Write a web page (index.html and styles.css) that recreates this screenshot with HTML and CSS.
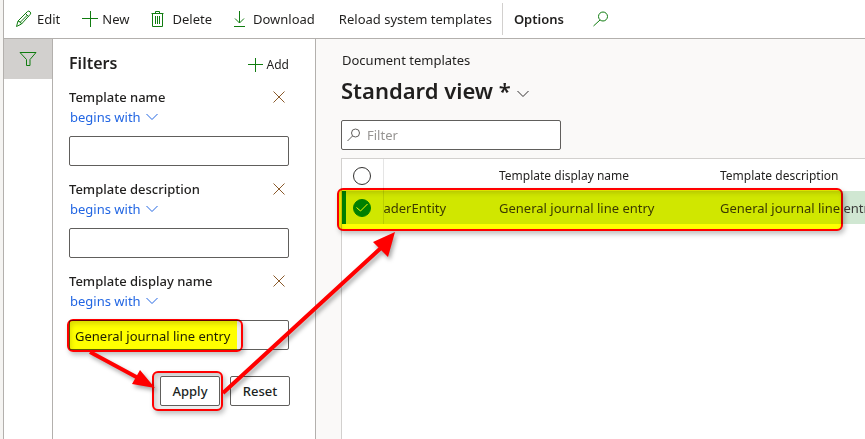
FILE: index.html
```html
<!DOCTYPE html>
<html lang="en">
<head>
    <meta charset="UTF-8">
    <meta name="viewport" content="width=device-width, initial-scale=1">
    <title>Document templates</title>
    <link rel="stylesheet" href="styles.css">
</head>
<body>
    <div class="app">
        <header class="toolbar">
            <button type="button" class="command edit">
                <svg class="icon" width="18" height="18" viewBox="0 0 18 18"><path d="M1.500 16.500l1.500-5.500L12.500 1.500q1.200-1 2.500.3 1.300 1.300.3 2.500L6.500 14zM3 11q3 .5 3.500 3M10.500 3.500l3 3M5 12.500l7.500-7.500"/></svg>
                Edit
            </button>
            <button type="button" class="command new">
                <svg class="icon" width="16" height="16" viewBox="0 0 16 16"><path d="M8.500 0v16M0 7.500h16"/></svg>
                New
            </button>
            <button type="button" class="command delete">
                <svg class="icon" width="14" height="16" viewBox="0 0 14 16"><path d="M.5 2.500h12M4.500 2.500v-2h4v2M1.500 2.500v13h10v-13M4.500 5v8M6.500 5v8M8.500 5v8"/></svg>
                Delete
            </button>
            <button type="button" class="command download">
                <svg class="icon" width="12" height="16" viewBox="0 0 12 16"><path d="M5.500 0v12M1 7.500l4.500 4.500 4.500-4.500M0 15.500h11"/></svg>
                Download
            </button>
            <button type="button" class="command reload">Reload system templates</button>
            <button type="button" class="command options">Options</button>
            <button type="button" class="command search" aria-label="Search">
                <svg class="icon" width="16" height="16" viewBox="0 0 16 16"><circle cx="10" cy="5.500" r="4.500"/><path d="M7 9l-6.500 6"/></svg>
            </button>
        </header>

        <div class="body">
            <nav class="rail">
                <button type="button" class="rail-button" aria-label="Show filters">
                    <svg class="icon" width="18" height="16" viewBox="0 0 18 16"><path d="M1 1.500h16l-6 7v6H7.500v-6z"/></svg>
                </button>
            </nav>

            <aside class="filters">
                <div class="filters-header">
                    <h2 class="filters-title">Filters</h2>
                    <button type="button" class="add">
                        <svg class="icon" width="16" height="16" viewBox="0 0 16 16"><path d="M8.500 1v14M1 7.500h15"/></svg>
                        Add
                    </button>
                </div>

                <div class="filter">
                    <div class="filter-header">
                        <label for="templateName">Template name</label>
                        <button type="button" class="remove" aria-label="Remove filter">
                            <svg width="12" height="12" viewBox="0 0 12 12"><path d="M.5.5l11 11M11.500.5l-11 11"/></svg>
                        </button>
                    </div>
                    <div class="operator">
                        <select aria-label="Template name operator"><option>begins with</option></select>
                        <svg width="12" height="8" viewBox="0 0 12 8"><path d="M.5 1l5.500 5.500L11.500 1"/></svg>
                    </div>
                    <input type="text" class="field" id="templateName">
                </div>

                <div class="filter">
                    <div class="filter-header">
                        <label for="templateDescription">Template description</label>
                        <button type="button" class="remove" aria-label="Remove filter">
                            <svg width="12" height="12" viewBox="0 0 12 12"><path d="M.5.5l11 11M11.500.5l-11 11"/></svg>
                        </button>
                    </div>
                    <div class="operator">
                        <select aria-label="Template description operator"><option>begins with</option></select>
                        <svg width="12" height="8" viewBox="0 0 12 8"><path d="M.5 1l5.500 5.500L11.500 1"/></svg>
                    </div>
                    <input type="text" class="field" id="templateDescription">
                </div>

                <div class="filter">
                    <div class="filter-header">
                        <label for="displayName">Template display name</label>
                        <button type="button" class="remove" aria-label="Remove filter">
                            <svg width="12" height="12" viewBox="0 0 12 12"><path d="M.5.5l11 11M11.500.5l-11 11"/></svg>
                        </button>
                    </div>
                    <div class="operator">
                        <select aria-label="Template display name operator"><option>begins with</option></select>
                        <svg width="12" height="8" viewBox="0 0 12 8"><path d="M.5 1l5.500 5.500L11.500 1"/></svg>
                    </div>
                    <input type="text" class="field" id="displayName" value="General journal line entry">
                </div>

                <div class="actions">
                    <button type="button" class="action">Apply</button>
                    <button type="button" class="action">Reset</button>
                </div>
            </aside>

            <main class="content">
                <div class="caption">Document templates</div>
                <h1 class="view-title">
                    Standard view *
                    <svg width="12" height="8" viewBox="0 0 12 8"><path d="M.5 1l5.500 5.500L11.500 1"/></svg>
                </h1>
                <div class="quick-filter">
                    <svg width="14" height="14" viewBox="0 0 14 14"><circle cx="8.500" cy="5" r="4"/><path d="M5.500 8L.5 13"/></svg>
                    <input type="text" placeholder="Filter" aria-label="Filter">
                </div>
                <div class="grid">
                    <table>
                        <colgroup>
                            <col class="col-select">
                            <col class="col-entity">
                            <col class="col-display">
                            <col>
                        </colgroup>
                        <thead>
                            <tr>
                                <th class="select"><input type="checkbox" aria-label="Select all"></th>
                                <th></th>
                                <th>Template display name</th>
                                <th>Template description</th>
                            </tr>
                        </thead>
                        <tbody>
                            <tr class="selected">
                                <td class="select"><input type="checkbox" aria-label="Select row" checked><svg class="check" width="12" height="9" viewBox="0 0 12 9"><path d="M.5 4.500l4 3.500L11.500 1"/></svg></td>
                                <td>aderEntity</td>
                                <td>General journal line entry</td>
                                <td>General journal line entry</td>
                            </tr>
                        </tbody>
                    </table>
                </div>
            </main>
        </div>
    </div>

    <!-- Step markers drawn over the page -->
    <div class="callout callout-value"></div>
    <div class="callout callout-apply"></div>
    <div class="callout callout-row"></div>
    <svg class="arrows" width="400" height="439" viewBox="0 0 400 439">
        <path class="shaft" d="M90 352L140 379M223 393L382 247"/>
        <path class="head" d="M155 388L140 370 132 384zM395 232L373 242 388 257z"/>
    </svg>
</body>
</html>
```
FILE: styles.css
```css
* {
    box-sizing: border-box;
}

body {
    margin: 0;
    overflow: hidden;
    background: #f5f4f2;
    color: #201f1e;
    font-family: "Noto Sans", "Open Sans", sans-serif;
    font-size: 13px;
    line-height: 20px;
}

button, input, select {
    font: inherit;
    color: inherit;
}

button {
    padding: 0;
    border: 0;
    background: none;
}

svg {
    flex: none;
    fill: none;
    stroke: #605e5c;
}

.icon {
    stroke: #107c10;
}

.app {
    display: flex;
    flex-direction: column;
    height: 100vh;
    margin-left: 3px;
    border-left: 1px solid #b3b0ad;
}

/* Toolbar */
.toolbar {
    display: flex;
    align-items: center;
    flex: none;
    gap: 22px;
    height: 39px;
    padding-left: 11px;
    border-bottom: 1px solid #b3b0ad;
    background: #fff;
    white-space: nowrap;
}

.command {
    display: flex;
    align-items: center;
    gap: 4px;
    height: 32px;
}

.delete, .download {
    gap: 7px;
}

.download {
    margin-right: 2px;
}

.options {
    margin-left: -12px;
    padding-left: 11px;
    border-left: 1px solid #d2d0ce;
    font-weight: 600;
}

.search {
    margin-left: 7px;
}

.body {
    display: flex;
    flex: 1;
    min-height: 0;
}

.rail {
    flex: none;
    width: 49px;
    border-right: 1px solid #b3b0ad;
    background: #fff;
}

.rail-button {
    display: flex;
    align-items: center;
    justify-content: center;
    width: 100%;
    height: 40px;
    background: #d2d0ce;
}

/* Filter pane */
.filters {
    flex: none;
    width: 263px;
    padding: 10px 26px 0 16px;
    border-right: 1px solid #b3b0ad;
    background: #fff;
}

.filters-header, .filter-header, .operator, .add {
    display: flex;
    align-items: center;
}

.filters-header {
    justify-content: space-between;
    height: 28px;
    margin-bottom: 10px;
}

.filters-title {
    margin: 0;
    font-size: 16px;
    font-weight: 600;
}

.add {
    gap: 4px;
    padding-top: 4px;
    font-size: 12px;
}

.filter {
    height: 92px;
}

.filter-header {
    justify-content: space-between;
    font-weight: 500;
}

.remove {
    display: flex;
    padding: 4px;
}

.remove svg {
    stroke: #8a5a2b;
}

.operator {
    gap: 5px;
    height: 20px;
    padding-left: 1px;
    color: #2266e3;
}

.operator select {
    appearance: none;
    padding: 0;
    border: 0;
    background: none;
}

.operator svg {
    stroke: #2266e3;
}

.field {
    display: block;
    width: 100%;
    height: 30px;
    margin-top: 9px;
    padding: 1px 5px 0;
    border: 1px solid #605e5c;
    border-radius: 2px;
    background: #fff;
}

.actions {
    display: flex;
    gap: 10px;
    margin-top: 13px;
    padding-left: 91px;
}

/* Buttons stay above the marker's tint */
.action {
    position: relative;
    z-index: 1;
    flex: none;
    width: 60px;
    height: 30px;
    border: 1px solid #605e5c;
    border-radius: 2px;
    background: #fff;
    font-weight: 500;
}

/* List page */
.content {
    display: flex;
    flex: 1;
    flex-direction: column;
    min-width: 0;
    padding: 11px 0 0 25px;
    background: #faf9f8;
}

.caption {
    padding-left: 1px;
}

.view-title {
    display: flex;
    align-items: center;
    gap: 6px;
    margin: 4px 0 13px;
    font-size: 22px;
    font-weight: 600;
    line-height: 33px;
}

.view-title svg {
    margin-top: 6px;
    stroke: #323130;
}

.quick-filter {
    display: flex;
    align-items: center;
    flex: none;
    gap: 6px;
    width: 220px;
    height: 30px;
    padding-left: 5px;
    border: 1px solid #605e5c;
    border-radius: 2px;
    background: #fff;
}

.quick-filter input {
    flex: 1;
    min-width: 0;
    padding: 0;
    border: 0;
    background: none;
}

.quick-filter input::placeholder {
    color: #979593;
}

.grid {
    flex: 1;
    margin-top: 8px;
    overflow: hidden;
    border: 1px solid #d2d0ce;
    border-width: 1px 0 0 1px;
    background: #fff;
}

.grid table {
    width: 100%;
    table-layout: fixed;
    border-collapse: collapse;
    white-space: nowrap;
}

.col-select {
    width: 41px;
}

.col-entity {
    width: 116px;
}

.col-display {
    width: 221px;
}

.grid th, .grid td {
    height: 32px;
    padding: 0;
    text-align: left;
}

.grid th {
    padding-top: 2px;
    font-size: 12px;
    font-weight: 400;
}

.grid td {
    height: 33px;
    color: #3b3a39;
}

.selected {
    background: #d0e7d2;
}

.grid .select {
    position: relative;
    border-right: 1px solid rgba(0, 0, 0, 0.1);
    text-align: center;
}

.selected .select {
    box-shadow: inset 4px 0 #008000;
}

.select input {
    appearance: none;
    display: block;
    width: 18px;
    height: 18px;
    margin: 0 auto;
    border: 1px solid #323130;
    border-radius: 50%;
    background: #fff;
}

.select input:checked {
    border-color: #008000;
    background: #008000;
}

.check {
    position: absolute;
    inset: 0;
    margin: auto;
    stroke: #fff;
}

/* Markers */
.callout {
    position: absolute;
    border: 2px solid #f00;
    border-radius: 6px;
    box-shadow: 2px 3px 5px rgba(0, 0, 0, 0.25), inset 2px 3px 5px rgba(0, 0, 0, 0.15);
    mix-blend-mode: multiply;
}

.callout-value {
    left: 67px;
    top: 319px;
    width: 176px;
    height: 33px;
    background: linear-gradient(to right, #ff0 168px, #eee 168px);
}

.callout-apply {
    left: 152px;
    top: 371px;
    width: 71px;
    height: 40px;
    background: #eee;
}

.callout-row {
    left: 337px;
    top: 188px;
    width: 506px;
    height: 43px;
    background: #ff0;
}

.arrows {
    position: absolute;
    left: 0;
    top: 0;
    z-index: 2;
    pointer-events: none;
    filter: drop-shadow(2px 3px 2px rgba(0, 0, 0, 0.35));
}

.shaft {
    stroke: #f00;
    stroke-width: 4;
}

.head {
    fill: #f00;
    stroke: none;
}
```
